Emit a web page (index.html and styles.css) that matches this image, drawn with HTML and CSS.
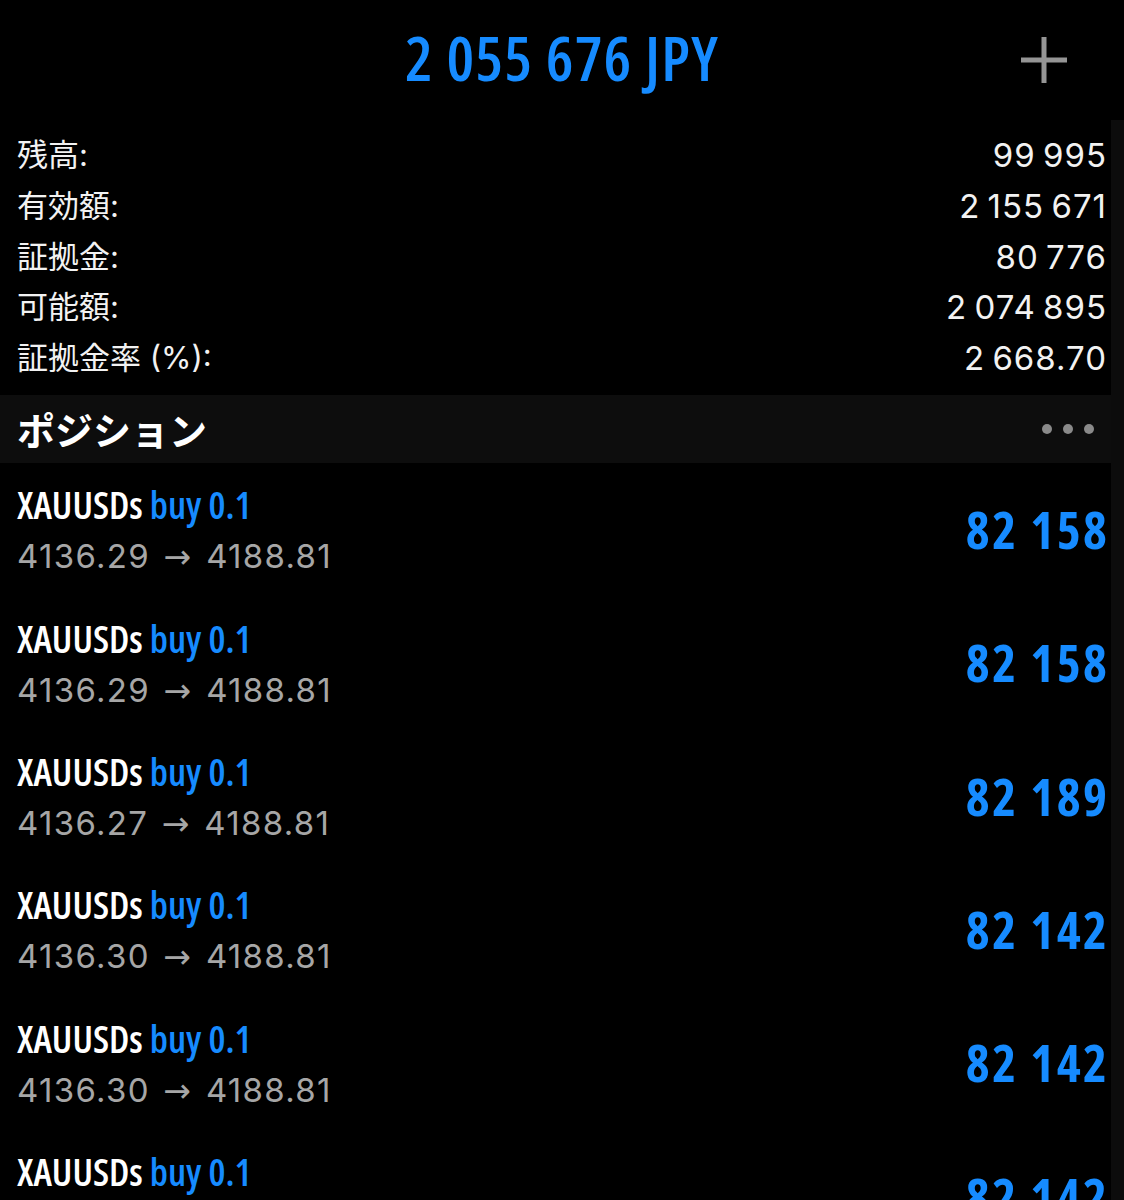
FILE: index.html
```html
<!DOCTYPE html>
<html lang="ja">
<head>
<meta charset="utf-8">
<title>Trade</title>
<link rel="stylesheet" href="styles.css">
</head>
<body>
<div class="screen">
  <header class="top">
    <div class="top-side"></div>
    <div class="equity">2 055 676 JPY</div>
    <div class="top-side top-right">
      <svg class="plus" width="48" height="48" viewBox="0 0 48 48" aria-hidden="true">
        <path d="M24 1V47M1 24H47" stroke="#959595" stroke-width="5" fill="none"/>
      </svg>
    </div>
  </header>

  <section class="summary">
    <div class="sum-row"><span class="sum-label">残高:</span><span class="sum-val">99 995</span></div>
    <div class="sum-row"><span class="sum-label">有効額:</span><span class="sum-val">2 155 671</span></div>
    <div class="sum-row"><span class="sum-label">証拠金:</span><span class="sum-val">80 776</span></div>
    <div class="sum-row"><span class="sum-label">可能額:</span><span class="sum-val">2 074 895</span></div>
    <div class="sum-row"><span class="sum-label">証拠金率 (%):</span><span class="sum-val">2 668.70</span></div>
  </section>

  <div class="band">
    <span class="band-title">ポジション</span>
    <span class="dots"><i></i><i></i><i></i></span>
  </div>

  <section class="positions">
    <div class="pos">
      <div class="pos-left">
        <div class="pos-sym">XAUUSDs <span class="side">buy 0.1</span></div>
        <div class="pos-price">4136.29 <span class="arrow">→</span> 4188.81</div>
      </div>
      <div class="pos-profit">82 158</div>
    </div>
    <div class="pos">
      <div class="pos-left">
        <div class="pos-sym">XAUUSDs <span class="side">buy 0.1</span></div>
        <div class="pos-price">4136.29 <span class="arrow">→</span> 4188.81</div>
      </div>
      <div class="pos-profit">82 158</div>
    </div>
    <div class="pos">
      <div class="pos-left">
        <div class="pos-sym">XAUUSDs <span class="side">buy 0.1</span></div>
        <div class="pos-price">4136.27 <span class="arrow">→</span> 4188.81</div>
      </div>
      <div class="pos-profit">82 189</div>
    </div>
    <div class="pos">
      <div class="pos-left">
        <div class="pos-sym">XAUUSDs <span class="side">buy 0.1</span></div>
        <div class="pos-price">4136.30 <span class="arrow">→</span> 4188.81</div>
      </div>
      <div class="pos-profit">82 142</div>
    </div>
    <div class="pos">
      <div class="pos-left">
        <div class="pos-sym">XAUUSDs <span class="side">buy 0.1</span></div>
        <div class="pos-price">4136.30 <span class="arrow">→</span> 4188.81</div>
      </div>
      <div class="pos-profit">82 142</div>
    </div>
    <div class="pos">
      <div class="pos-left">
        <div class="pos-sym">XAUUSDs <span class="side">buy 0.1</span></div>
        <div class="pos-price">4136.30 <span class="arrow">→</span> 4188.81</div>
      </div>
      <div class="pos-profit">82 142</div>
    </div>
  </section>
  <div class="track"></div>
</div>
</body>
</html>
```

FILE: styles.css
```css
html, body {
  margin: 0;
  padding: 0;
  background: #000;
}
body {
  font-family: "Inter", "Noto Sans CJK JP", sans-serif;
  color: #f2f2f2;
  overflow: hidden;
}
.screen {
  position: relative;
  width: 1124px;
  height: 1200px;
  overflow: hidden;
  background: #000;
}
.top {
  height: 120px;
  display: grid;
  grid-template-columns: 1fr auto 1fr;
  align-items: center;
}
.top-right {
  display: flex;
  justify-content: flex-end;
  padding-right: 56px;
}
.plus {
  display: block;
}
.equity {
  font-family: "Open Sans", sans-serif;
  font-stretch: 75%;
  font-weight: 600;
  font-size: 62px;
  letter-spacing: 1.2px;
  color: #168bff;
  line-height: 1;
  padding-bottom: 6px;
}
.summary {
  padding: 10px 17px 0 17px;
}
.sum-row {
  display: flex;
  justify-content: space-between;
  height: 50.75px;
  line-height: 50.75px;
  font-size: 31px;
}
.sum-val {
  font-size: 33px;
  letter-spacing: 1px;
  word-spacing: -3px;
}
.band {
  margin-top: 11px;
  height: 68px;
  background: #0d0d0d;
  display: flex;
  align-items: center;
  justify-content: space-between;
  padding: 0 30px 0 17px;
}
.band-title {
  font-size: 38px;
  font-weight: 700;
  color: #fff;
}
.dots {
  display: flex;
  gap: 11px;
}
.dots i {
  width: 10px;
  height: 10px;
  border-radius: 50%;
  background: #8a8a8a;
}
.positions {
  padding: 0 17px;
}
.pos {
  display: flex;
  align-items: center;
  justify-content: space-between;
  height: 133.33px;
}
.pos-left {
  display: flex;
  flex-direction: column;
  padding-top: 18px;
  padding-bottom: 11px;
}
.pos-sym {
  font-family: "Open Sans", sans-serif;
  font-stretch: 75%;
  font-weight: 600;
  font-size: 38px;
  line-height: 48px;
  color: #fff;
}
.side {
  color: #168bff;
}
.pos-price {
  font-size: 33px;
  letter-spacing: 1.3px;
  line-height: 56px;
  color: #a6a6a6;
}
.arrow {
  font-family: "DejaVu Sans", sans-serif;
  font-weight: 400;
  padding: 0 3px;
}
.pos-profit {
  font-family: "Open Sans", sans-serif;
  font-stretch: 75%;
  font-weight: 700;
  font-size: 51px;
  letter-spacing: 2.5px;
  margin-right: -2.5px;
  color: #168bff;
  line-height: 1;
}
.track {
  position: absolute;
  top: 120px;
  right: 0;
  bottom: 0;
  width: 13px;
  background: #0c0c0c;
}
```
